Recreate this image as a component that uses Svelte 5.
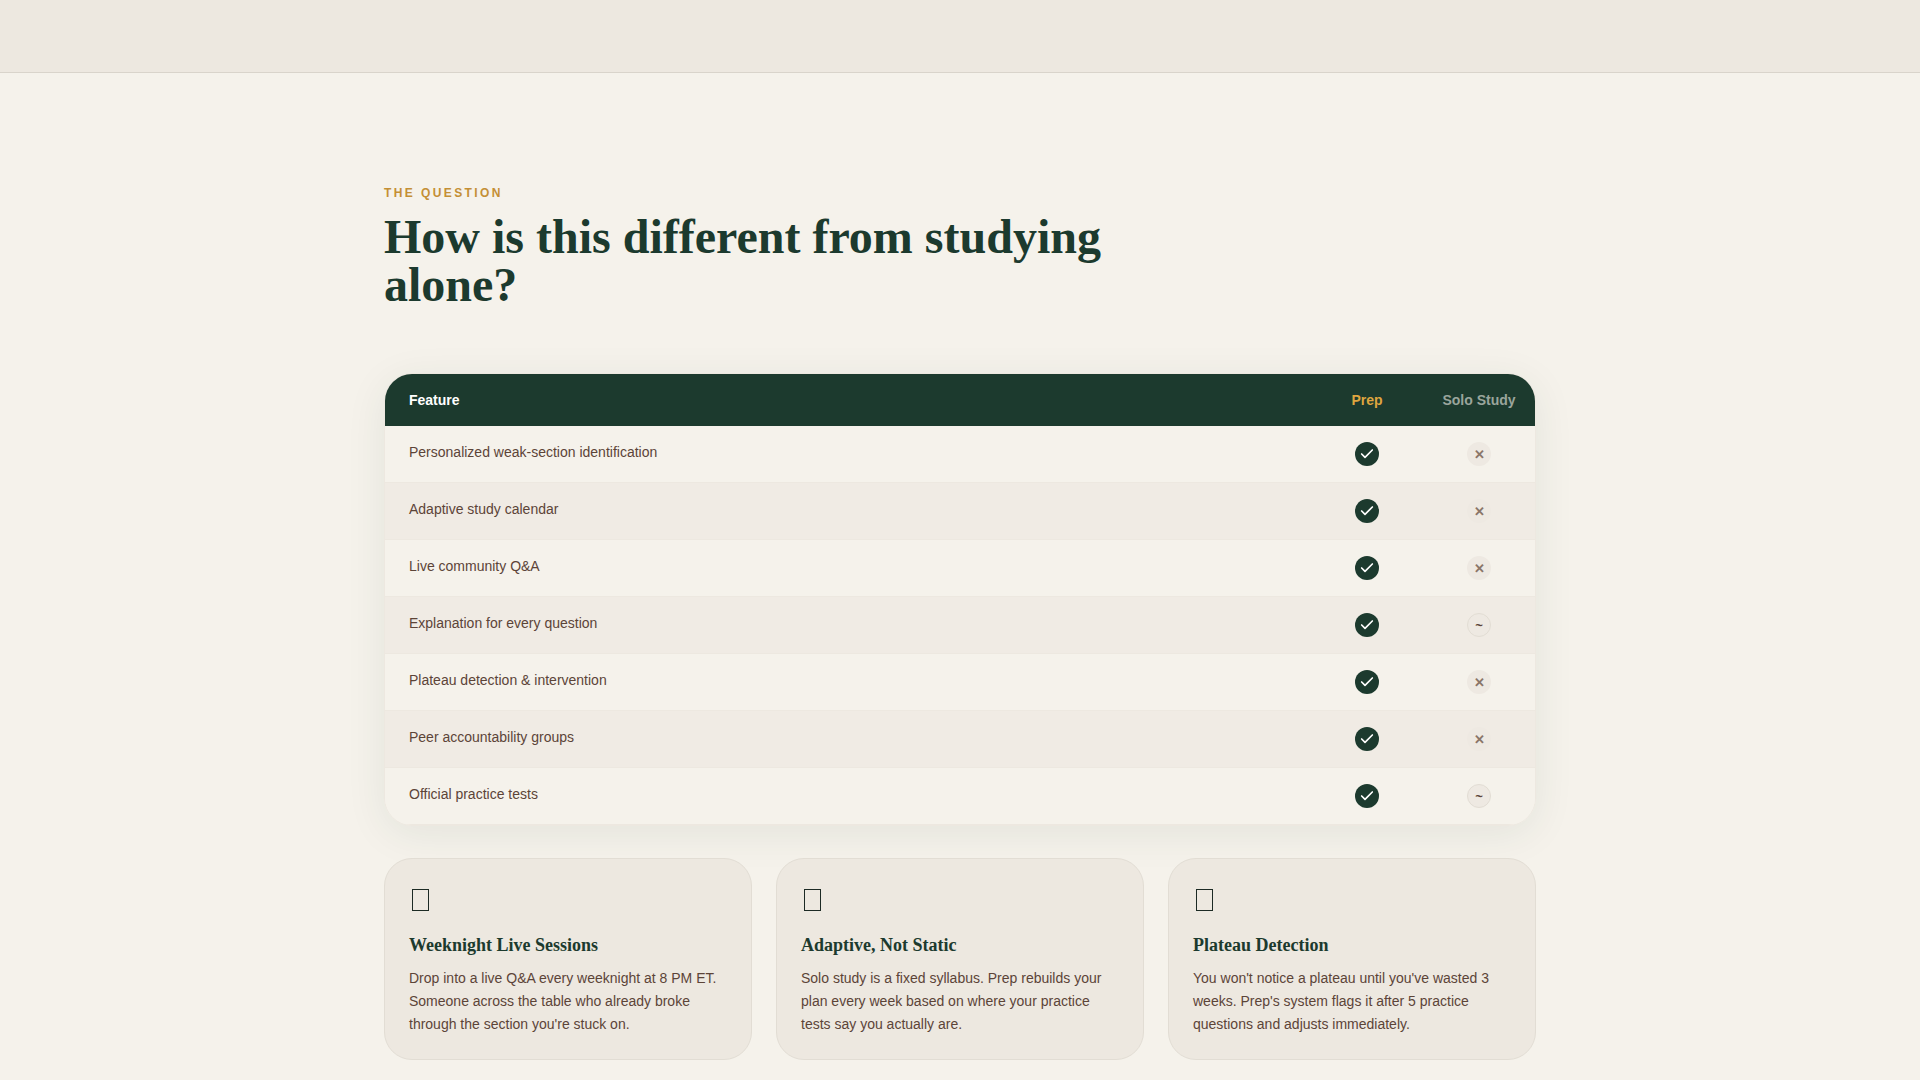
<script lang="ts">
	const rows = [
		{ name: 'Personalized weak-section identification', solo: 'no' },
		{ name: 'Adaptive study calendar', solo: 'no' },
		{ name: 'Live community Q&A', solo: 'no' },
		{ name: 'Explanation for every question', solo: 'partial' },
		{ name: 'Plateau detection & intervention', solo: 'no' },
		{ name: 'Peer accountability groups', solo: 'no' },
		{ name: 'Official practice tests', solo: 'partial' }
	];
	const cards = [
		{
			title: 'Weeknight Live Sessions',
			text: "Drop into a live Q&A every weeknight at 8 PM ET. Someone across the table who already broke through the section you're stuck on."
		},
		{
			title: 'Adaptive, Not Static',
			text: 'Solo study is a fixed syllabus. Prep rebuilds your plan every week based on where your practice tests say you actually are.'
		},
		{
			title: 'Plateau Detection',
			text: "You won't notice a plateau until you've wasted 3 weeks. Prep's system flags it after 5 practice questions and adjusts immediately."
		}
	];
</script>

<header class="topbar"></header>

<main>
	<p class="eyebrow">The Question</p>
	<h1>How is this different from studying alone?</h1>

	<div class="table">
		<div class="row head">
			<span class="feature">Feature</span>
			<span class="col prep">Prep</span>
			<span class="col solo">Solo Study</span>
		</div>
		{#each rows as r}
			<div class="row">
				<span class="feature">{r.name}</span>
				<span class="col">
					<span class="check">
						<svg viewBox="0 0 24 24" width="16" height="16" fill="none" stroke="#fff" stroke-width="2.5" stroke-linecap="round" stroke-linejoin="round"><path d="M20 6 9 17l-5-5" /></svg>
					</span>
				</span>
				<span class="col">
					{#if r.solo === 'no'}
						<span class="mark no">✕</span>
					{:else}
						<span class="mark partial">~</span>
					{/if}
				</span>
			</div>
		{/each}
	</div>

	<div class="cards">
		{#each cards as c}
			<div class="card">
				<div class="icon"><span class="tofu"></span></div>
				<h3>{c.title}</h3>
				<p>{c.text}</p>
			</div>
		{/each}
	</div>
</main>

<style>
	:global(body) {
		margin: 0;
		background: #f5f2eb;
		font-family: 'Liberation Sans', Arial, sans-serif;
		color: #1c3a2e;
	}
	.topbar {
		height: 72px;
		background: #ede8e0;
		border-bottom: 1px solid #d9d4cb;
	}
	main {
		width: 1152px;
		margin: 0 auto;
		padding: 112px 0 0;
	}
	.eyebrow {
		margin: 0 0 12px;
		font-size: 12px;
		line-height: 16px;
		font-weight: 700;
		letter-spacing: 0.2em;
		text-transform: uppercase;
		color: #c48f35;
	}
	h1 {
		margin: 0 0 64px;
		max-width: 760px;
		font-family: 'Liberation Serif', 'Times New Roman', serif;
		font-size: 48px;
		line-height: 48px;
		font-weight: 700;
		color: #1c3a2e;
	}
	.table {
		border: 1px solid #ede8e0;
		border-radius: 28px;
		overflow: hidden;
		box-shadow: 0 8px 40px rgba(28, 58, 46, 0.08);
		margin-bottom: 32px;
	}
	.row {
		display: grid;
		grid-template-columns: 1fr 112px 112px;
		align-items: center;
		box-sizing: border-box;
		height: 57px;
		padding: 0 0 0 24px;
		font-size: 14px;
		color: #5c4438;
		background: #f5f2eb;
		border-bottom: 1px solid #ede8e0;
	}
	.row:nth-child(odd) {
		background: #f0ebe4;
	}
	.row.head {
		height: 52px;
		background: #1c3a2e;
		color: #fff;
		font-weight: 700;
		border-bottom: none;
	}
	.row .feature {
		margin-bottom: 4px;
	}
	.row.head .feature {
		margin-bottom: 0;
	}
	.col {
		display: flex;
		justify-content: center;
	}
	.row.head .prep {
		color: #dfa53f;
	}
	.row.head .solo {
		color: #9aa59c;
	}
	.check,
	.mark {
		width: 24px;
		height: 24px;
		border-radius: 50%;
		display: flex;
		align-items: center;
		justify-content: center;
	}
	.check {
		background: #1c3a2e;
	}
	.mark {
		font-size: 13px;
		font-weight: 700;
		color: #8a7568;
		background: #eee9e2;
	}
	.mark.partial {
		border: 1px solid #e2ddd4;
		box-sizing: border-box;
		color: #5c4438;
	}
	.cards {
		display: grid;
		grid-template-columns: repeat(3, 1fr);
		gap: 24px;
	}
	.card {
		background: #ede8e0;
		border: 1px solid #e2ddd4;
		border-radius: 28px;
		padding: 24px 24px 23px;
	}
	.icon {
		display: flex;
		align-items: center;
		height: 34px;
		margin-bottom: 16px;
	}
	.tofu {
		box-sizing: border-box;
		width: 17px;
		height: 22px;
		margin-left: 3px;
		border: 1px solid #1c2a24;
	}
	h3 {
		margin: 0 0 10px;
		font-family: 'Liberation Serif', 'Times New Roman', serif;
		font-size: 18px;
		line-height: 24px;
		font-weight: 700;
		color: #1c3a2e;
	}
	.card p {
		margin: 0;
		font-size: 14px;
		line-height: 23.1px;
		color: #5c4438;
	}
</style>
